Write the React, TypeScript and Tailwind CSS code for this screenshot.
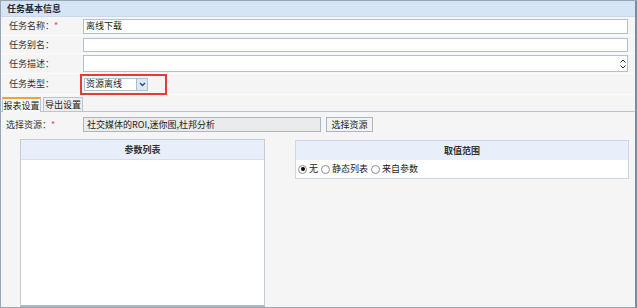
import React from "react";

const font = { fontFamily: '"Noto Sans CJK SC", "Liberation Sans", sans-serif' };

const Row = ({ label, required, children, h }: { label: string; required?: boolean; children?: React.ReactNode; h: string }) => (
  <div className={`flex items-center border-b border-[#fbfbfb] ${h}`}>
    <div className="w-[82px] pl-[8px] text-[9px] text-[#333]">
      {label}：{required && <span className="text-[#e24b4b]">*</span>}
    </div>
    <div className="flex-1 pr-[7px]">{children}</div>
  </div>
);

const Radio = ({ checked, label }: { checked?: boolean; label: string }) => (
  <label className="flex items-center gap-[2px] mr-[3px]">
    <span className="w-[9px] h-[9px] rounded-full border border-[#8d8d8d] bg-white flex items-center justify-center">
      {checked && <span className="w-[4px] h-[4px] rounded-full bg-black" />}
    </span>
    <span>{label}</span>
  </label>
);

export default function App() {
  return (
    <div style={font} className="w-[637px] h-[308px] bg-[#f5f5f5] border border-[#97a6b6] border-r-2 border-r-[#7f8d9b] flex flex-col text-[9px] text-[#222] overflow-hidden">
      <div className="h-[16px] bg-[#d5e5f6] border-b border-[#c9d8ea] pl-[6px] flex items-center font-bold text-[9px] text-[#1d2b3a]">
        任务基本信息
      </div>
      <Row label="任务名称" required h="h-[19px]">
        <div className="h-[15px] bg-white border border-[#b3c0cf] flex items-center px-[2px]">离线下载</div>
      </Row>
      <Row label="任务别名" h="h-[18px]">
        <div className="h-[14px] bg-white border border-[#b3c0cf]" />
      </Row>
      <Row label="任务描述" h="h-[20px]">
        <div className="h-[17px] bg-white border border-[#b3c0cf] flex justify-end">
          <div className="w-[8px] flex flex-col items-center justify-center text-[#444]">
            <svg width="6" height="4" viewBox="0 0 6 4"><path d="M0.5 3.5L3 1L5.5 3.5" stroke="#333" fill="none" strokeWidth="1" /></svg>
            <svg width="6" height="4" viewBox="0 0 6 4" className="mt-[2px]"><path d="M0.5 0.5L3 3L5.5 0.5" stroke="#333" fill="none" strokeWidth="1" /></svg>
          </div>
        </div>
      </Row>
      <Row label="任务类型" h="h-[21px]">
        <div className="w-[87px] h-[21px] border-2 border-[#e8383d] -ml-[3px] flex items-center pl-[2px]">
          <div className="w-[64px] h-[13px] bg-white border border-[#b3c0cf] flex items-center justify-between pl-[1px]">
            <span>资源离线</span>
            <span className="w-[11px] h-[11px] bg-[#dce8f6] border-l border-[#a8bcd4] flex items-center justify-center">
              <svg width="7" height="5" viewBox="0 0 7 5"><path d="M1 1L3.5 3.5L6 1" stroke="#2d4a6f" fill="none" strokeWidth="1.3" /></svg>
            </span>
          </div>
        </div>
      </Row>
      <div className="h-[16px] mt-[1px] flex items-end pl-[1px] gap-[2px] border-b border-[#b8c4d1]">
        <div className="h-[15px] w-[39px] bg-[#fafafa] border border-[#b8c4d1] border-t-2 border-t-[#f0a03c] border-b-0 flex items-center justify-center -mb-px">报表设置</div>
        <div className="h-[14px] w-[40px] bg-[#eeeeee] border border-[#b8c4d1] border-b-0 flex items-center justify-center">导出设置</div>
      </div>
      <div className="flex-1 flex flex-col">
        <div className="flex items-center h-[23px] pt-[2px]">
          <div className="w-[82px] pl-[5px] text-[#333]">
            选择资源：<span className="text-[#e24b4b]">*</span>
          </div>
          <div className="w-[238px] h-[15px] bg-[#ebebeb] border border-[#a9b6c5] flex items-center pl-[3px]">社交媒体的ROI,迷你图,杜邦分析</div>
          <div className="ml-[5px] w-[47px] h-[15px] bg-[#f2f2f2] border border-[#a9b6c5] flex items-center justify-center">选择资源</div>
        </div>
        <div className="flex-1 flex pt-[4px] pl-[19px] pr-[6px] gap-[30px]">
          <div className="w-[245px] flex flex-col border border-[#c3ccd6] border-b-2 border-b-[#aeb8c4]">
            <div className="h-[20px] bg-[#e8eefa] border-b border-[#d6dfeb] flex items-center justify-center font-bold text-[#333]">参数列表</div>
            <div className="flex-1 bg-white" />
          </div>
          <div className="flex-1 self-start mt-[1px] border border-[#cbd7e6]">
            <div className="h-[19px] bg-[#e8effb] flex items-center justify-center font-bold text-[#333]">取值范围</div>
            <div className="h-[18px] bg-white flex items-center pl-[2px]">
              <Radio checked label="无" />
              <Radio label="静态列表" />
              <Radio label="来自参数" />
            </div>
          </div>
        </div>
      </div>
    </div>
  );
}
